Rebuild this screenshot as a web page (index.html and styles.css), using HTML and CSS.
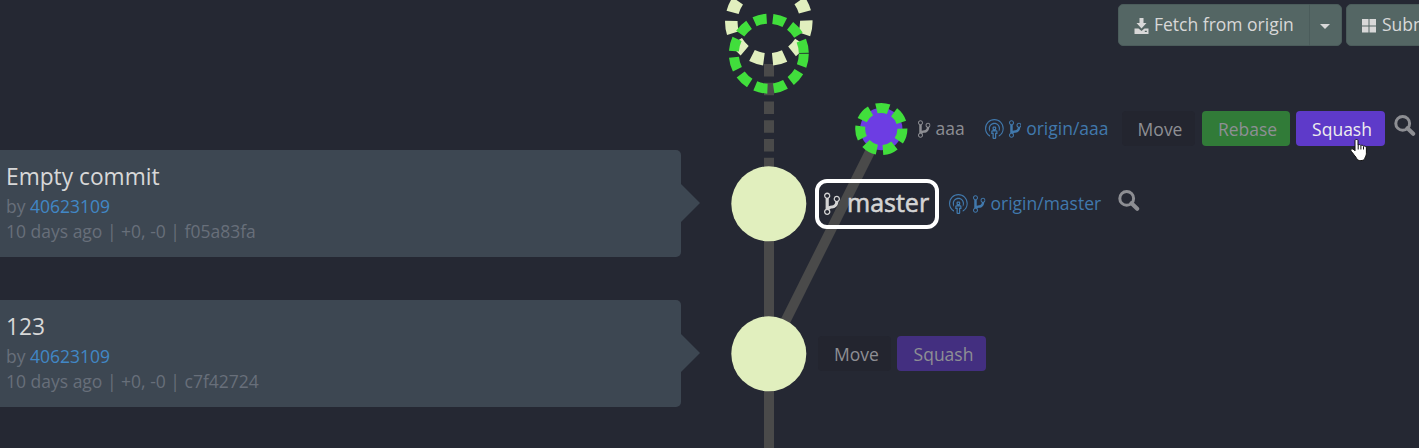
FILE: index.html
```html
<!DOCTYPE html>
<html lang="en">
<head>
<meta charset="utf-8">
<title>Commit graph</title>
<link rel="stylesheet" href="styles.css">
</head>
<body>
<svg class="defs" width="0" height="0" aria-hidden="true">
  <symbol id="branch" viewBox="0 0 10 16"><path fill="currentColor" fill-rule="evenodd" d="M10 5c0-1.11-.89-2-2-2a1.993 1.993 0 0 0-1 3.72v.3c-.02.52-.23.98-.63 1.38-.4.4-.86.61-1.38.63-.83.02-1.48.16-2 .45V4.72a1.993 1.993 0 0 0-1-3.72C.88 1 0 1.89 0 3a2 2 0 0 0 1 1.72v6.56c-.59.35-1 .99-1 1.72 0 1.11.89 2 2 2 1.11 0 2-.89 2-2 0-.53-.2-1-.53-1.36.09-.06.48-.41.59-.47.25-.11.56-.17.94-.17 1.05-.05 1.95-.45 2.75-1.25S8.95 7.77 9 6.73h-.02C9.59 6.37 10 5.73 10 5zM2 1.8c.66 0 1.2.55 1.2 1.2 0 .65-.55 1.2-1.2 1.2C1.35 4.2.8 3.65.8 3c0-.65.55-1.2 1.2-1.2zm0 12.41c-.66 0-1.2-.55-1.2-1.2 0-.65.55-1.2 1.2-1.2.65 0 1.2.55 1.2 1.2 0 .65-.55 1.2-1.2 1.2zm6-8c-.66 0-1.2-.55-1.2-1.2 0-.65.55-1.2 1.2-1.2.65 0 1.2.55 1.2 1.2 0 .65-.55 1.2-1.2 1.2z"/></symbol>
  <symbol id="broadcast" viewBox="0 0 16 16"><path fill="currentColor" fill-rule="evenodd" d="M9 9H8c.55 0 1-.45 1-1V7c0-.55-.45-1-1-1H7c-.55 0-1 .45-1 1v1c0 .55.45 1 1 1H6c-.55 0-1 .45-1 1v2h1v3c0 .55.45 1 1 1h1c.55 0 1-.45 1-1v-3h1v-2c0-.55-.45-1-1-1zM7 7h1v1H7V7zm2 4H8v4H7v-4H6v-1h3v1zm2.09-3.5c0-1.98-1.61-3.59-3.59-3.59A3.593 3.593 0 0 0 4 8.31v1.98c-.61-.77-1-1.73-1-2.8 0-2.48 2.02-4.5 4.500-4.500S12 5.01 12 7.490c0 1.060-.39 2.030-1 2.800V8.310c.06-.27.09-.53.09-.81zm3.910 0c0 2.880-1.630 5.380-4 6.630v-1.050a6.553 6.553 0 0 0 3.090-5.580A6.590 6.590 0 0 0 7.500.91 6.590 6.590 0 0 0 .91 7.500c0 2.360 1.230 4.420 3.090 5.580v1.050A7.497 7.497 0 0 1 0 7.500C0 3.360 3.360 0 7.500 0S15 3.360 15 7.500z"/></symbol>
  <symbol id="search" viewBox="0 0 22 22"><circle cx="8.700" cy="8.400" r="6.900" fill="none" stroke="currentColor" stroke-width="3"/><path d="M13.500 13.200l5.700 5.600" stroke="currentColor" stroke-width="4" stroke-linecap="round"/></symbol>
</svg>
<main class="app">
  <svg class="graph" width="1419" height="448" viewBox="0 0 1419 448">
    <g class="edges">
      <path d="M769 64V204" stroke-dasharray="12.5 6.25"/>
      <path d="M769 204V448"/>
      <path d="M881.3 129L769 354"/>
    </g>
    <circle class="ghost" cx="768.8" cy="22" r="37.5"/>
    <circle class="target" cx="768.8" cy="53.7" r="35"/>
    <circle class="commit" cx="768.8" cy="203.8" r="37.5"/>
    <circle class="commit" cx="768.8" cy="353.8" r="37.5"/>
    <circle class="moved" cx="881.3" cy="129" r="21.2"/>
    <circle class="target" cx="881.3" cy="129" r="21.1"/>
  </svg>

  <section class="commits">
    <article class="card">
      <h2 class="title">Empty commit</h2>
      <p class="meta">by <a class="author">40623109</a></p>
      <p class="meta">10 days ago | +0, -0 | f05a83fa</p>
    </article>
    <article class="card">
      <h2 class="title">123</h2>
      <p class="meta">by <a class="author">40623109</a></p>
      <p class="meta">10 days ago | +0, -0 | c7f42724</p>
    </article>
  </section>

  <nav class="toolbar">
    <div class="split">
      <button class="tool fetch"><svg width="15" height="16" viewBox="0 0 15 16"><path fill="currentColor" fill-rule="evenodd" d="M5.500 0h4v5h3L7.500 10.500 2.500 5h3zM.5 10.500h4l3 2.500 3-2.500h4V16H.5zM10.800 12.700v1.300h2v-1.300z"/></svg><span>Fetch from origin</span></button>
      <button class="tool caret"><svg width="10" height="5" viewBox="0 0 10 5"><path fill="currentColor" d="M0 0h10L5 5z"/></svg></button>
    </div>
    <button class="tool submodules"><svg width="14" height="14" viewBox="0 0 14 14"><path fill="currentColor" d="M0 0h6.500v6.500H0zM7.500 0H14v6.500H7.500zM0 7.500h6.500v6H0zM7.500 7.500H14v6H7.500z"/></svg><span>Submodules</span></button>
  </nav>

  <div class="refs refs-aaa">
    <span class="ref"><svg class="branch"><use href="#branch"/></svg>aaa</span>
    <span class="ref remote"><svg class="cast"><use href="#broadcast"/></svg><svg class="branch"><use href="#branch"/></svg>origin/aaa</span>
    <button class="act move">Move</button>
    <button class="act rebase">Rebase</button>
    <button class="act squash hot">Squash</button>
    <svg class="search"><use href="#search"/></svg>
  </div>

  <div class="refs refs-master">
    <span class="ref current"><svg class="branch"><use href="#branch"/></svg><span class="name">master</span></span>
    <span class="ref remote"><svg class="cast"><use href="#broadcast"/></svg><svg class="branch"><use href="#branch"/></svg>origin/master</span>
    <svg class="search"><use href="#search"/></svg>
  </div>

  <div class="refs refs-base">
    <button class="act move">Move</button>
    <button class="act squash">Squash</button>
  </div>

  <svg class="pointer" width="18" height="24" viewBox="0 0 18 24"><path fill="#fff" stroke="#111" stroke-width="1" d="M5 1.500c0-1.300 3-1.300 3 0V6c1-.8 2.500-.4 2.800.5 1-.6 2.300-.2 2.600.7 1.200-.5 3 .2 3 1.600v5.500c0 2.500-1.200 3.500-1.700 5.200-.4 2.800-7.400 2.800-8 0C6 18 4 16 2.500 13.800 1.200 12 .2 11.200 1 10.300c1-1.100 2.800-.1 4 1.500z"/><path stroke="#111" fill="none" d="M8.200 6v4.500M10.900 6.700v3.800M13.500 7.500v3"/></svg>
</main>
</body>
</html>
```
FILE: styles.css
```css
* { box-sizing: border-box; }
body { margin: 0; background: #252833; font: 17.5px/25px "Open Sans", "Noto Sans", sans-serif; overflow: hidden; }
.defs { position: absolute; }
.app { position: relative; width: 1419px; height: 448px; overflow: hidden; }
.graph { position: absolute; inset: 0; }
.edges { stroke: #4a4a4a; stroke-width: 10; fill: none; }
.commit { fill: #e1efbe; }
.ghost { fill: none; stroke: #e1efbe; stroke-width: 12.5; stroke-dasharray: 12.5 8.75; }
.target { fill: none; stroke: #41de3c; stroke-width: 10; stroke-dasharray: 12.5 6.25; }
.moved { fill: #6d3de3; }

.commits { display: flex; flex-direction: column; gap: 43px; width: 681px; padding-top: 150px; }
.card { position: relative; height: 107px; padding: 11px 6px; background: #3d4752; border-radius: 0 5px 5px 0; }
.card::after { content: ""; position: absolute; left: 100%; top: 34px; border: solid transparent; border-width: 19px 0 19px 19px; border-left-color: #3d4752; }
.title { margin: 0 0 2px; font-size: 22.75px; font-weight: 400; line-height: 31px; color: #d8d8d8; }
.meta { margin: 0; color: #686f7a; }
.author { color: #4187c6; }

.toolbar { position: absolute; left: 1118px; top: 4px; display: flex; gap: 4px; }
.split { display: flex; }
.tool { display: flex; align-items: center; height: 42px; padding: 0 15px; border: 1px solid #4b5c5b; border-radius: 5px; background: #546664; color: #d8d8d8; font: inherit; white-space: nowrap; }
.tool span { position: relative; top: -1px; }
.tool svg { position: relative; top: 1px; }
.fetch { width: 192px; gap: 5px; border-radius: 5px 0 0 5px; }
.fetch svg { flex: none; }
.caret { width: 33px; margin-left: -1px; padding: 0 10px; border-radius: 0 5px 5px 0; }
.submodules { gap: 6px; flex: none; }

.refs { position: absolute; display: flex; align-items: center; color: #8d8e93; }
.refs-aaa { left: 918px; top: 111px; height: 35px; }
.refs-master { left: 815px; top: 179px; height: 50px; }
.refs-base { left: 818px; top: 336px; height: 35px; }
.ref { display: flex; align-items: center; white-space: nowrap; }
.branch { width: 12.5px; height: 20px; margin-right: 5px; flex: none; }
.cast { width: 20px; height: 20px; margin-right: 4px; flex: none; }
.remote { color: #4179ad; margin-left: 20px; }
.current { width: 124px; height: 50px; padding-left: 5px; border: 4px solid #fff; border-radius: 12px; color: #d4d4d4; font-size: 25px; -webkit-text-stroke: .6px #d4d4d4; }
.current .branch { width: 16px; height: 25.6px; margin-right: 7px; }
.name { margin-top: -4px; }
.refs-master .remote { margin: -2px 0 0 10px; }
.refs-master .remote svg { margin-top: 1px; }
.act { height: 35px; padding: 2px 0 0 4px; border: 0; border-radius: 4px; color: #8e8f94; font: inherit; }
.move { width: 73px; background: #23252f; }
.rebase { width: 88px; margin-left: 7px; background: #317b38; }
.squash { width: 89px; margin-left: 6px; background: #432f80; }
.refs-aaa .move { margin-left: 13px; }
.hot { background: #5e3ac9; color: #eee; }
.search { width: 22px; height: 22px; flex: none; }
.refs-aaa .search { margin: -5px 0 0 9px; }
.refs-master .search { margin: -6px 0 0 17px; }
.pointer { position: absolute; left: 1350px; top: 139px; }
```
